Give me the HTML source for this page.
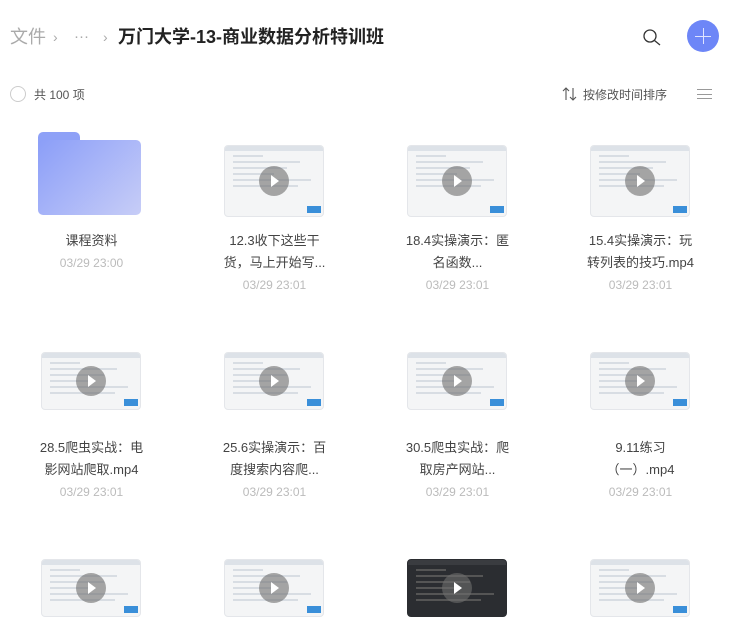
<!DOCTYPE html>
<html><head><meta charset="utf-8"><style>
*{margin:0;padding:0;box-sizing:border-box}
body{width:734px;height:636px;overflow:hidden;background:#fff;font-family:"Liberation Sans","Noto Sans CJK SC",sans-serif;position:relative}
.abs{position:absolute}
.c{position:absolute;top:25px;font-size:18px;color:#aaa;white-space:nowrap;line-height:24px}
.item{position:absolute;width:183px;text-align:center}
.thumb{position:absolute;left:41px;width:100px;border-radius:4px;overflow:hidden;background:#f4f5f6;border:1px solid #e4e6ea}
.thumb .bar{height:5px;background:#dde2e8}
.thumb .ln{height:2px;background:#d8dde3;margin:4px 8px}
.thumb .play{position:absolute;left:50%;top:50%;width:30px;height:30px;margin:-15px 0 0 -15px;border-radius:50%;background:rgba(110,110,110,.6)}
.thumb .play:after{content:"";position:absolute;left:12px;top:9px;border-left:8px solid #fff;border-top:6px solid transparent;border-bottom:6px solid transparent}
.thumb .logo{position:absolute;right:2px;bottom:3px;width:14px;height:7px;background:#3a8fd9}
.name{position:absolute;left:0;width:183px;font-size:13px;color:#444;line-height:22px;padding:0 22px}
.date{position:absolute;left:0;width:183px;font-size:12px;color:#bbb}
</style></head><body>
<div class="c" style="left:10px">文件</div>
<div class="c" style="left:53px;font-size:14px">›</div>
<div class="c" style="left:74px;font-size:15px">···</div>
<div class="c" style="left:103px;font-size:14px">›</div>
<div class="c" style="left:118px;color:#222;font-weight:bold">万门大学-13-商业数据分析特训班</div>
<svg class="abs" style="left:641px;top:27px" width="22" height="22" viewBox="0 0 22 22"><circle cx="9" cy="9" r="6" fill="none" stroke="#333" stroke-width="1.3"/><line x1="13.5" y1="13.5" x2="19" y2="18" stroke="#333" stroke-width="1.3"/></svg>
<div class="abs" style="left:687px;top:20px;width:32px;height:32px;border-radius:50%;background:#6d86f7"></div>
<div class="abs" style="left:695px;top:35.5px;width:16px;height:1px;background:#dfe4ff"></div>
<div class="abs" style="left:702.5px;top:28px;width:1px;height:16px;background:#dfe4ff"></div>
<div class="abs" style="left:10px;top:86px;width:16px;height:16px;border:1px solid #ccc;border-radius:50%"></div>
<div class="abs" style="left:34px;top:86px;font-size:12px;color:#555">共 100 项</div>
<svg class="abs" style="left:562px;top:87px" width="16" height="14" viewBox="0 0 16 14"><path d="M4 13V1M1 4l3-3 3 3M11 1v12M8 10l3 3 3-3" fill="none" stroke="#555" stroke-width="1.1"/></svg>
<div class="abs" style="left:583px;top:86px;font-size:12px;color:#555">按修改时间排序</div>
<div class="abs" style="left:697px;top:89px;width:15px;height:10px;border-top:1px solid #999;border-bottom:1px solid #999"></div>
<div class="abs" style="left:697px;top:93.5px;width:15px;height:1px;background:#999"></div>

<div class="item" style="left:0;top:0;height:300px">
<div class="abs" style="left:38px;top:132px;width:42px;height:14px;border-radius:5px 5px 0 0;background:#8ea1f7"></div>
<div class="abs" style="left:38px;top:140px;width:103px;height:75px;border-radius:5px;background:linear-gradient(135deg,#8b9ef8,#c7cdf7)"></div>
<div class="name" style="top:230px">课程资料</div><div class="date" style="top:256px">03/29 23:00</div></div>

<div id="g"></div>
<script>
var items=[
[1,0,"12.3收下这些干<br>货，马上开始写...",1],[2,0,"18.4实操演示：匿<br>名函数...",1],[3,0,"15.4实操演示：玩<br>转列表的技巧.mp4",1],
[0,1,"28.5爬虫实战：电<br>影网站爬取.mp4",1],[1,1,"25.6实操演示：百<br>度搜索内容爬...",1],[2,1,"30.5爬虫实战：爬<br>取房产网站...",1],[3,1,"9.11练习<br>（一）.mp4",1],
[0,2,"",0],[1,2,"",0],[2,2,"",2],[3,2,"",0]];
var h="";
items.forEach(function(it){
var x=it[0]*183,r=it[1],base=r*207;
var ty=r==0?145:(r==1?352:559),th=r==0?72:58;
var dark=it[3]==2;
var lines="";for(var i=0;i<6;i++)lines+='<div class="ln" style="width:'+(30+((i*37)%50))+'px;'+(dark?'background:#555':'')+'"></div>';
h+='<div class="item" style="left:'+x+'px;top:0;height:636px"><div class="thumb" style="top:'+ty+'px;height:'+th+'px;'+(dark?'background:#2b2d31;border-color:#2b2d31':'')+'"><div class="bar" '+(dark?'style="background:#3a3c40"':'')+'></div>'+lines+(dark?'':'<div class="logo"></div>')+'<div class="play"></div></div>';
if(it[2]){h+='<div class="name" style="top:'+(230+base)+'px">'+it[2]+'</div><div class="date" style="top:'+(278+base)+'px">03/29 23:01</div>';}
h+='</div>';});
document.getElementById("g").innerHTML=h;
</script>
</body></html>
